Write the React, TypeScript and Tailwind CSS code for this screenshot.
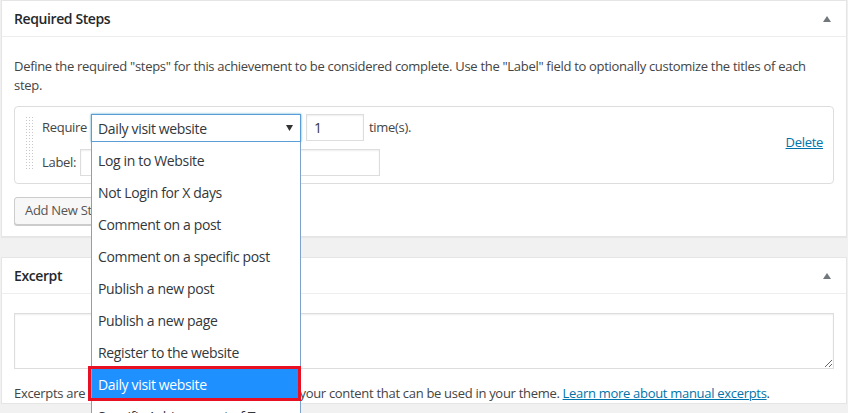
import React from 'react';

const OPTIONS = [
  'Log in to Website',
  'Not Login for X days',
  'Comment on a post',
  'Comment on a specific post',
  'Publish a new post',
  'Publish a new page',
  'Register to the website',
  'Daily visit website',
  'Specific Achievement of Type',
];

const Toggle = () => (
  <svg width="10" height="8" viewBox="0 0 10 8" className="block">
    <polygon points="5,1 9,7 1,7" fill="#72777c" />
  </svg>
);

const DragHandle = () => (
  <svg width="7" height="54" className="block shrink-0">
    <defs>
      <pattern id="dots" width="3" height="3" patternUnits="userSpaceOnUse">
        <rect width="1" height="1" fill="#c8c8c8" />
      </pattern>
    </defs>
    <rect width="7" height="54" fill="url(#dots)" />
  </svg>
);

const App: React.FC = () => {
  return (
    <div className="h-[413px] overflow-hidden bg-[#f1f1f1] px-px font-['Open_Sans',sans-serif] text-[13px] tracking-[-0.3px] text-[#444]">
      {/* Required Steps */}
      <div className="border border-[#e5e5e5] bg-white shadow-[0_1px_1px_rgba(0,0,0,0.04)]">
        <div className="flex h-[36px] items-center justify-between border-b border-[#eee] pl-[12px] pr-[14px]">
          <h2 className="text-[14px] font-semibold tracking-[-0.4px] text-[#23282d]">Required Steps</h2>
          <Toggle />
        </div>
        <div className="px-[12px] pt-[20px] pb-[11px]">
          <p className="leading-[19px]">
            Define the required "steps" for this achievement to be considered complete. Use the "Label" field to optionally customize the titles of each step.
          </p>

          <div className="mt-[11px] flex rounded-[4px] border border-[#ddd] pl-[11px] pr-[10px] pt-[7px] pb-[7px]">
            <div className="pt-[3px]">
              <DragHandle />
            </div>
            <div className="ml-[9px] flex flex-col gap-[7px]">
              <div className="flex items-center">
                <span className="w-[49px]">Require</span>
                <div className="relative">
                  <div className="flex h-[28px] w-[210px] items-center justify-between border border-[#5b9dd9] pl-[6px] pr-[7px] text-[14px] tracking-[-0.35px] text-[#32373c] shadow-[0_0_2px_rgba(30,140,190,0.8)]">
                    <span>Daily visit website</span>
                    <svg width="7" height="6" viewBox="0 0 7 6">
                      <polygon points="0,0 7,0 3.5,6" fill="#333" />
                    </svg>
                  </div>
                  {/* open dropdown list */}
                  <div className="absolute top-[28px] left-0 z-10 w-[210px] border-x border-[#7da2ce] bg-white pt-[2px] text-[14px] tracking-[-0.35px] text-[#32373c]">
                    {OPTIONS.map((opt) => {
                      const active = opt === 'Daily visit website';
                      return (
                        <div
                          key={opt}
                          className={`relative flex h-[32px] items-center whitespace-nowrap pl-[6px] pt-px ${active ? 'bg-[#1e90ff] text-white' : ''}`}
                        >
                          {opt}
                          {active && (
                            <div className="absolute -top-[2px] -bottom-[1px] -left-[4px] -right-[1px] border-[3px] border-[#e81123]" />
                          )}
                        </div>
                      );
                    })}
                  </div>
                </div>
                <div className="ml-[5px] flex h-[27px] w-[58px] -translate-y-[1px] items-center border border-[#ddd] pl-[7px] text-[14px] text-[#32373c] shadow-[inset_0_1px_2px_rgba(0,0,0,0.07)]">
                  1
                </div>
                <span className="ml-[5px]">time(s).</span>
              </div>
              <div className="flex items-center">
                <span className="w-[38px]">Label:</span>
                <div className="h-[27px] w-[300px] border border-[#ddd] shadow-[inset_0_1px_2px_rgba(0,0,0,0.07)]" />
              </div>
            </div>
            <div className="ml-auto flex items-center pb-[4px]">
              <a href="#" className="text-[#0073aa] underline">Delete</a>
            </div>
          </div>

          <div className="mt-[13px] flex">
            <button className="h-[28px] rounded-[3px] border border-[#ccc] bg-[#f7f7f7] px-[10px] text-[13px] text-[#555] shadow-[0_1px_0_#ccc]">
              Add New Step
            </button>
          </div>
        </div>
      </div>

      {/* Excerpt */}
      <div className="mt-[20px] border border-[#e5e5e5] bg-white">
        <div className="flex h-[36px] items-center justify-between border-b border-[#eee] pl-[12px] pr-[14px]">
          <h2 className="text-[14px] font-semibold tracking-[-0.4px] text-[#23282d]">Excerpt</h2>
          <Toggle />
        </div>
        <div className="px-[12px] pt-[19px]">
          <textarea className="block h-[56px] w-full resize-y border border-[#ddd] shadow-[inset_0_1px_2px_rgba(0,0,0,0.07)]" />
          <p className="mt-[15px] leading-[19px]">
            Excerpts are optional hand-crafted summaries of your content that can be used in your theme.{' '}
            <a href="#" className="text-[#0073aa] underline">Learn more about manual excerpts</a>.
          </p>
        </div>
      </div>
    </div>
  );
};

export default App;
